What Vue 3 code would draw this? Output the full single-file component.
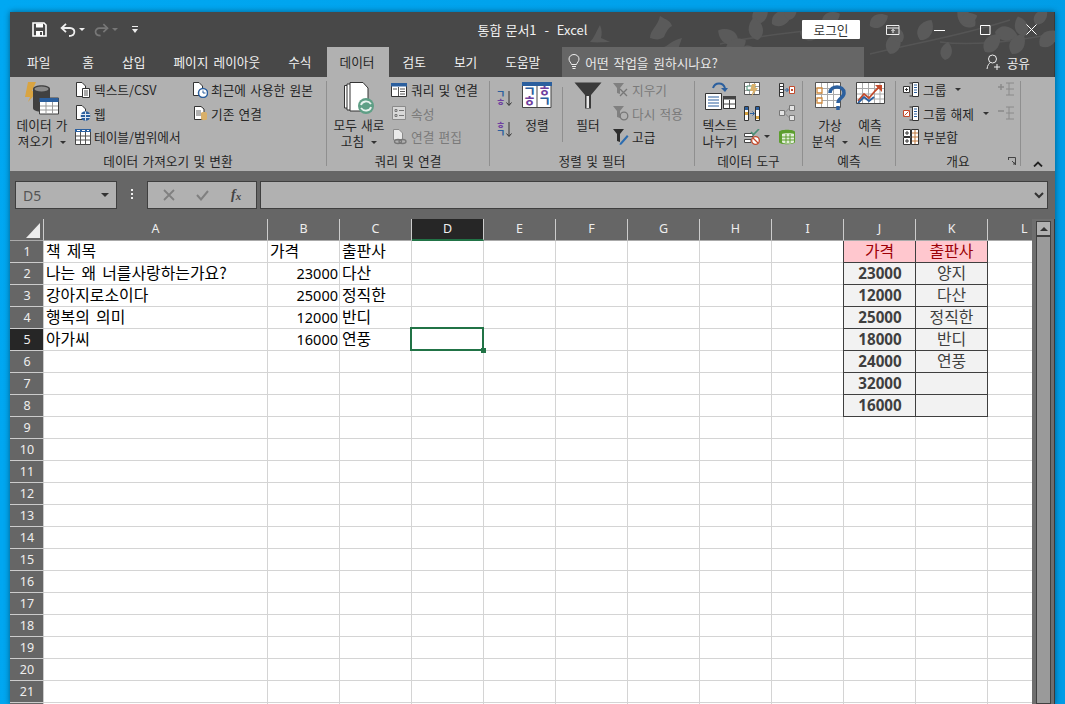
<template>
  <div class="desktop">
    <div class="window">
      <svg class="decor" width="1045" height="65" viewBox="0 0 1045 65">
        <g fill="none" stroke="#555" stroke-width="1.5">
          <path d="M710 32C760 20 800 22 840 10" />
          <path d="M860 42C910 30 950 24 1000 8" />
          <path d="M930 30C960 34 1000 30 1044 22" />
        </g>
        <g fill="#5a5a5a">
          <path
            v-for="(l, i) in leaves"
            :key="i"
            d="M0 0C4 -10 16 -10 23 0C16 9 4 9 0 0Z"
            :transform="`translate(${l[0]} ${l[1]}) rotate(${l[2]}) scale(${l[3]})`"
          />
          <path d="M580 30C584 26 586 20 590 13C592 18 592 22 591 26L600 30C594 30 588 31 580 30Z" />
          <path d="M640 26C640 18 648 14 650 4C656 8 660 8 662 14C658 16 656 20 654 25C650 28 646 28 640 26Z" />
          <path d="M652 36C658 34 662 28 672 26C670 32 668 36 668 40L676 46C668 46 660 42 652 36Z" />
        </g>
      </svg>

      <div class="titlebar">
        <div class="quick">
          <svg width="15" height="15" viewBox="0 0 15 15">
            <path d="M1 1H12L14 3V14H1Z" fill="none" stroke="#fff" stroke-width="1.6" />
            <path d="M4 1.5H11V5.5H4ZM4 9H11V14H4Z" fill="#fff" />
            <path d="M8 10H10V13H8Z" fill="#484848" />
          </svg>
          <svg class="undo" width="16" height="14" viewBox="0 0 16 14">
            <path d="M2 5H10C16 5 16 13 9 13" fill="none" stroke="#eee" stroke-width="1.8" />
            <path d="M6 0.8L1.6 5L6 9.2" fill="none" stroke="#eee" stroke-width="1.8" />
          </svg>
          <span class="tri"></span>
          <svg class="redo" width="15" height="14" viewBox="0 0 16 14">
            <path d="M14 5H6C0 5 0 13 7 13" fill="none" stroke="#777" stroke-width="1.8" />
            <path d="M10 0.8L14.4 5L10 9.2" fill="none" stroke="#777" stroke-width="1.8" />
          </svg>
          <span class="tri dim"></span>
          <svg class="custom" width="6" height="8" viewBox="0 0 6 8">
            <path d="M0 0H6V1H0ZM0 3H6L3 7Z" fill="#eee" />
          </svg>
        </div>
        <div class="doc-title">통합 문서1&nbsp; - &nbsp;Excel</div>
        <div class="controls">
          <button class="login">로그인</button>
          <div class="ctl">
            <svg width="14" height="10" viewBox="0 0 14 10">
              <path d="M.5.5H13V9.5H.5ZM.5 3H13" fill="none" stroke="#eee" />
              <path d="M7 8V4.5M5.4 6L7 4.4L8.6 6" fill="none" stroke="#eee" />
            </svg>
          </div>
          <div class="ctl">
            <svg width="11" height="10" viewBox="0 0 11 10"><path d="M0 5.5H11" stroke="#fff" /></svg>
          </div>
          <div class="ctl">
            <svg width="11" height="10" viewBox="0 0 11 10"><path d="M.5.5H10V9.5H.5Z" fill="none" stroke="#fff" /></svg>
          </div>
          <div class="ctl">
            <svg width="11" height="11" viewBox="0 0 11 11"><path d="M.5.5L10.5 10.5M10.5.5L.5 10.5" stroke="#fff" /></svg>
          </div>
        </div>
      </div>

      <div class="tabbar">
        <div class="tabs">
          <span
            v-for="t in tabs"
            :key="t"
            :class="['tab', { active: t === '데이터', first: t === '파일' }]"
          >{{ t }}</span>
        </div>
        <div class="search">
          <svg width="12" height="16" viewBox="0 0 12 16">
            <path d="M3.5 10.5C3 8.5 1 7.5 1 5A5 4.5 0 0 1 11 5C11 7.5 9 8.500 8.500 10.500Z" fill="none" stroke="#eee" />
            <path d="M4 12.500H8M4.500 14.500H7.500" stroke="#eee" />
          </svg>
          <span>어떤 작업을 원하시나요?</span>
        </div>
        <div class="share">
          <svg width="15" height="16" viewBox="0 0 15 16">
            <circle cx="6.500" cy="5" r="4" fill="none" stroke="#eee" />
            <path d="M1 15C1.500 11 3 9.500 4.500 8.500M11 10V16M8 13H14" fill="none" stroke="#eee" />
          </svg>
          <span>공유</span>
        </div>
      </div>

      <div class="ribbon">
        <!-- 데이터 가져오기 및 변환 -->
        <section class="group g1">
          <div class="body">
            <div class="big w54">
              <div class="slot">
                <svg width="34" height="36" viewBox="0 0 34 36">
                  <path d="M11 0H3L0 15H5L3 20L13 9H7Z" fill="#d9a441" />
                  <path d="M8 7C8 2 25 2 25 7V26C25 31 8 31 8 26Z" fill="#404040" />
                  <ellipse cx="16.500" cy="7" rx="7" ry="2.500" fill="#8a8a8a" />
                  <path d="M14.500 16H33.500V32H14.500Z" fill="#fff" stroke="#404040" />
                  <path d="M14.500 16H33.500V20H14.500Z" fill="#2b5f9e" />
                  <path d="M21 20V32M27.500 20V32M15 24H33M15 28H33" stroke="#999" />
                </svg>
              </div>
              <div>데이터 가</div>
              <div>져오기 <span class="tri ink"></span></div>
            </div>
            <div class="col w117">
              <div class="row">
                <svg class="ic" width="16" height="16" viewBox="0 0 16 16">
                  <path d="M1.500.500H7L10.500 4V14.500H1.500Z" fill="#fff" stroke="#333" />
                  <path d="M7.500 6.500H14.500V15.500H7.500Z" fill="#fff" stroke="#333" />
                  <path d="M9 9H13M9 11H13M9 13H13" stroke="#555" />
                </svg>
                <span>텍스트/CSV</span>
              </div>
              <div class="row">
                <svg class="ic" width="16" height="16" viewBox="0 0 16 16">
                  <path d="M1.500.500H7L10.500 4V14.500H1.500Z" fill="#fff" stroke="#333" />
                  <circle cx="10.500" cy="11" r="4.800" fill="#2b5f9e" />
                  <path d="M6 9.500H15M6 12.500H15M10.500 6.500V15.500" stroke="#dfe8f2" />
                </svg>
                <span>웹</span>
              </div>
              <div class="row">
                <svg class="ic" width="16" height="16" viewBox="0 0 16 16">
                  <path d="M.500.500H15.500V15.500H.500Z" fill="#fff" stroke="#444" />
                  <path d="M0 0H16V3H0Z" fill="#2b5f9e" />
                  <path d="M2 1.500H5M7 1.500H10M12 1.500H14" stroke="#fff" />
                  <path d="M5.500 3V15M10.500 3V15M1 7H15M1 11H15" stroke="#555" />
                </svg>
                <span>테이블/범위에서</span>
              </div>
            </div>
            <div class="col">
              <div class="row">
                <svg class="ic" width="16" height="16" viewBox="0 0 16 16">
                  <path d="M1.500.500H7L10.500 4V13.500H1.500Z" fill="#fff" stroke="#333" />
                  <circle cx="11" cy="11" r="4.500" fill="#fff" stroke="#2b5f9e" stroke-width="1.500" />
                  <path d="M11 8.500V11H13.500" fill="none" stroke="#2b5f9e" />
                </svg>
                <span>최근에 사용한 원본</span>
              </div>
              <div class="row">
                <svg class="ic" width="16" height="16" viewBox="0 0 16 16">
                  <path d="M2.500 1.500H9L12 4V14.500H2.500Z" fill="#fff" stroke="#333" />
                  <path d="M4 6H9M4 8H9M4 10H9" stroke="#666" />
                  <path d="M9 8C9 6.500 15 6.500 15 8V14C15 15.500 9 15.500 9 14Z" fill="#d9b06a" />
                </svg>
                <span>기존 연결</span>
              </div>
            </div>
          </div>
          <div class="label">데이터 가져오기 및 변환</div>
        </section>
        <i class="sep"></i>

        <!-- 쿼리 및 연결 -->
        <section class="group g2">
          <div class="body">
            <div class="big w56">
              <div class="slot">
                <svg width="32" height="34" viewBox="0 0 32 34">
                  <path d="M1.500 3.500H16V26H1.500Z" fill="#fff" stroke="#333" />
                  <path d="M4 2H18V28H4Z" fill="#fff" stroke="#333" />
                  <path d="M7 .500H20L25 6V29H7Z" fill="#fff" stroke="#333" />
                  <circle cx="23" cy="24" r="8" fill="#5f9f86" />
                  <path d="M18 23C19 19 25 18 28 22M28 25C27 29 21 30 18 26" fill="none" stroke="#e8f2ee" stroke-width="1.800" />
                </svg>
              </div>
              <div>모두 새로</div>
              <div>고침 <span class="tri ink"></span></div>
            </div>
            <div class="col">
              <div class="row">
                <svg class="ic" width="16" height="14" viewBox="0 0 16 14">
                  <path d="M.500.500H15.500V13.500H.500Z" fill="#fff" stroke="#333" />
                  <path d="M0 0H16V3.500H0Z" fill="#2b5f9e" />
                  <path d="M9 6H14M9 8.500H14M9 11H14M7.500 4V13M2 6H6" stroke="#555" />
                </svg>
                <span>쿼리 및 연결</span>
              </div>
              <div class="row off">
                <svg class="ic" width="16" height="14" viewBox="0 0 16 14">
                  <path d="M1.500.500H14.500V13.500H1.500Z" fill="#d8d8d8" stroke="#8a8a8a" />
                  <path d="M4 3.500H6V5.500H4ZM4 8.500H6V10.500H4ZM8 4.500H13M8 9.500H13" fill="none" stroke="#777" />
                </svg>
                <span>속성</span>
              </div>
              <div class="row off">
                <svg class="ic" width="16" height="16" viewBox="0 0 16 16">
                  <path d="M2.500.500H8L11.500 4V11H2.500Z" fill="#eaeaea" stroke="#8a8a8a" />
                  <ellipse cx="7" cy="12.500" rx="3.500" ry="2" fill="none" stroke="#777" stroke-width="1.300" />
                  <ellipse cx="11.500" cy="12.500" rx="3.500" ry="2" fill="none" stroke="#777" stroke-width="1.300" />
                </svg>
                <span>연결 편집</span>
              </div>
            </div>
          </div>
          <div class="label">쿼리 및 연결</div>
        </section>
        <i class="sep"></i>

        <!-- 정렬 및 필터 -->
        <section class="group g3">
          <div class="body">
            <div class="sort-col">
              <svg class="jamo-icon" width="16" height="16" viewBox="0 0 16 16">
                <text class="jamo"><tspan x="-1" y="7" class="blue">ㄱ</tspan><tspan x="-1" y="15" class="purple">ㅎ</tspan></text>
                <path d="M12 0V14M9.500 11.500L12 14.500L14.500 11.500" fill="none" stroke="#333" />
              </svg>
              <svg class="jamo-icon" width="16" height="16" viewBox="0 0 16 16">
                <text class="jamo"><tspan x="-1" y="7" class="purple">ㅎ</tspan><tspan x="-1" y="15" class="blue">ㄱ</tspan></text>
                <path d="M12 0V14M9.500 11.500L12 14.500L14.500 11.500" fill="none" stroke="#333" />
              </svg>
            </div>
            <div class="big w40 ml4">
              <div class="slot">
                <svg class="jamo-icon" width="30" height="26" viewBox="0 0 30 26">
                  <path d="M.500.500H29V25.500H.500Z" fill="#fff" stroke="#444" />
                  <path d="M0 0H30V4H0Z" fill="#2b5f9e" />
                  <path d="M15 4V26" stroke="#444" />
                  <text class="jamo big-j"><tspan x="1" y="14" class="blue">ㄱ</tspan><tspan x="1" y="24" class="purple">ㅎ</tspan><tspan x="16" y="14" class="purple">ㅎ</tspan><tspan x="16" y="24" class="blue">ㄱ</tspan></text>
                </svg>
              </div>
              <div>정렬</div>
            </div>
            <i class="inner-sep"></i>
            <div class="big w40 ml5">
              <div class="slot">
                <svg width="28" height="28" viewBox="0 0 28 28">
                  <path d="M.500.500H27.500L17 13V26.500H11V13Z" fill="#3a3a3a" />
                  <path d="M12.500 14H15V26H12.500Z" fill="#e8e8e8" />
                </svg>
              </div>
              <div>필터</div>
            </div>
            <div class="col ml5">
              <div class="row off">
                <svg class="ic" width="16" height="16" viewBox="0 0 16 16">
                  <path d="M0 1H11L7 6V12L4 11V6Z" fill="#808080" />
                  <path d="M7 7L14 14M14 7L7 14" stroke="#777" stroke-width="1.300" />
                </svg>
                <span>지우기</span>
              </div>
              <div class="row off">
                <svg class="ic" width="16" height="16" viewBox="0 0 16 16">
                  <path d="M0 1H11L7 6V13L4 12V6Z" fill="#808080" />
                  <circle cx="11" cy="11" r="3.800" fill="none" stroke="#777" stroke-width="1.300" />
                </svg>
                <span>다시 적용</span>
              </div>
              <div class="row">
                <svg class="ic" width="16" height="18" viewBox="0 0 16 18">
                  <path d="M0 1H11L7 6V14L4 13V6Z" fill="#2e2e2e" />
                  <path d="M7 15L14 7L15.500 8.500L8.500 16.500L6.500 17Z" fill="#2b6cb0" />
                </svg>
                <span>고급</span>
              </div>
            </div>
          </div>
          <div class="label">정렬 및 필터</div>
        </section>
        <i class="sep"></i>

        <!-- 데이터 도구 -->
        <section class="group g4">
          <div class="body">
            <div class="big w46">
              <div class="slot">
                <svg width="31" height="28" viewBox="0 0 31 28">
                  <path d="M8 6C10 0 18 0 20 6" fill="none" stroke="#2b5f9e" stroke-width="2" />
                  <path d="M16 6H23L20 10Z" fill="#2b5f9e" />
                  <path d="M.500 11.500H16.500V27.500H.500Z" fill="#fff" stroke="#333" />
                  <path d="M3 15H14M3 18H14M3 21H14M3 24H14" stroke="#2b5f9e" />
                  <path d="M18.500 14.500H30.500V26.500H18.500Z" fill="#fff" stroke="#333" />
                  <path d="M18 14H31V17.500H18Z" fill="#444" />
                  <path d="M24.500 18V26M19 22H30" stroke="#444" />
                </svg>
              </div>
              <div>텍스트</div>
              <div>나누기</div>
            </div>
            <div class="col w35 ml1">
              <div class="row">
                <svg width="16" height="15" viewBox="0 0 16 15">
                  <path d="M.500.500H15.500V12.500H.500Z" fill="#fff" stroke="#555" />
                  <path d="M5.500 1V12M10.500 1V12M1 4.500H15M1 8.500H15" stroke="#999" />
                  <path d="M3 4H11V8H3Z" fill="#fff" stroke="#4b8f75" />
                  <path d="M12 2H8L6 9H9L7 15L14 6H11Z" fill="#d9b06a" />
                </svg>
              </div>
              <div class="row">
                <svg width="16" height="15" viewBox="0 0 16 15">
                  <path d="M.500.500H4.500V14.500H.500ZM11.500.500H15.500V14.500H11.500Z" fill="#fff" stroke="#333" />
                  <path d="M1 1H4V4H1ZM12 1H15V4H12Z" fill="#2b5f9e" />
                  <path d="M1 6H4V9H1ZM12 10H15V13H12Z" fill="#d9a441" />
                  <path d="M6 7.500H10M8.500 5.500L10.500 7.500L8.500 9.500" fill="none" stroke="#2b5f9e" />
                </svg>
              </div>
              <div class="row">
                <svg width="16" height="16" viewBox="0 0 16 16">
                  <path d="M.500 4.500H9V7.500H.500ZM.500 10.500H7V13.500H.500Z" fill="#fff" stroke="#444" />
                  <path d="M7 3L9.500 5.500L15 0" fill="none" stroke="#4b8f75" stroke-width="1.600" />
                  <circle cx="11.500" cy="11.500" r="3.800" fill="#fff" stroke="#c24a2c" stroke-width="1.300" />
                  <path d="M9 9L14 14" stroke="#c24a2c" stroke-width="1.300" />
                </svg>
                <span class="tri ink ml4"></span>
              </div>
            </div>
            <div class="col">
              <div class="row">
                <svg width="16" height="14" viewBox="0 0 16 14">
                  <path d="M.500.500H4.500V13.500H.500Z" fill="#fff" stroke="#333" />
                  <path d="M1 3.500H4M1 6.500H4M1 9.500H4" stroke="#333" />
                  <path d="M5.500 7H9M7.500 5L9.500 7L7.500 9" fill="none" stroke="#2b5f9e" />
                  <path d="M10.500 3.500H15.500V10.500H10.500Z" fill="#fff" stroke="#c24a2c" />
                  <path d="M12 6H14V8H12Z" fill="#c24a2c" />
                </svg>
              </div>
              <div class="row">
                <svg width="16" height="16" viewBox="0 0 16 16">
                  <path d="M.500 5.500H5.500V10.500H.500ZM10.500.500H15.500V5.500H10.500ZM10.500 10.500H15.500V15.500H10.500Z" fill="#e4e4e4" stroke="#777" />
                  <path d="M5.500 8L10.500 3M5.500 8L10.500 13" stroke="#888" />
                </svg>
              </div>
              <div class="row">
                <svg width="16" height="16" viewBox="0 0 16 16">
                  <path d="M0 3C0 0 16 0 16 3V13C16 16 0 16 0 13Z" fill="#5c9e2e" />
                  <path d="M3 5C3 4 15 4 15 5V13C15 15 3 15 3 13Z" fill="#e4eedc" />
                  <path d="M7 5V14M11 5V14M3 8H15M3 11H15" stroke="#5c9e2e" />
                </svg>
              </div>
            </div>
          </div>
          <div class="label">데이터 도구</div>
        </section>
        <i class="sep"></i>

        <!-- 예측 -->
        <section class="group g5">
          <div class="body">
            <div class="big w40">
              <div class="slot">
                <svg width="31" height="30" viewBox="0 0 31 30">
                  <path d="M.500.500H25.500V25.500H.500Z" fill="#fff" stroke="#555" />
                  <path d="M6.500 1V25M12.500 1V25M18.500 1V25M1 6.500H25M1 12.500H25M1 18.500H25" stroke="#aaa" />
                  <path d="M2 6H7V11H2ZM2 16H7V21H2Z" fill="#fff" stroke="#d08a3e" stroke-width="1.300" />
                  <path d="M15 11C15 3 29 3 29 11C29 16 23 16 23 21M23 24V28" fill="none" stroke="#2b5f9e" stroke-width="3.500" />
                </svg>
              </div>
              <div>가상</div>
              <div>분석 <span class="tri ink"></span></div>
            </div>
            <div class="big w40">
              <div class="slot">
                <svg width="29" height="26" viewBox="0 0 29 26">
                  <path d="M.500.500H28.500V21.500H.500Z" fill="#fff" stroke="#444" />
                  <path d="M6.500 1V21M12.500 1V21M18.500 1V21M24 1V21M1 6.500H28M1 12H28M1 17H28" stroke="#aaa" />
                  <path d="M2 19L8 12L13 16L19 9L24 4" fill="none" stroke="#c24a2c" stroke-width="1.800" />
                  <path d="M2 21L8 15L13 19L18 15" fill="none" stroke="#2b5f9e" stroke-width="1.800" />
                  <path d="M19 3H26V10Z" fill="#c24a2c" />
                </svg>
              </div>
              <div>예측</div>
              <div>시트</div>
            </div>
          </div>
          <div class="label">예측</div>
        </section>
        <i class="sep"></i>

        <!-- 개요 -->
        <section class="group g6">
          <div class="body">
            <div class="col w95">
              <div class="row">
                <svg class="ic" width="16" height="15" viewBox="0 0 16 15">
                  <path d="M.500 4.500H6.500V10.500H.500Z" fill="#fff" stroke="#333" />
                  <path d="M2 7.500H5M3.500 6V9" stroke="#333" />
                  <path d="M6.500 1H9M6.500 14H9" stroke="#333" />
                  <path d="M9.500.500H15.500V14.500H9.500Z" fill="#fff" stroke="#333" />
                  <path d="M11 3H14M11 5.500H14M11 8H14M11 10.500H14" stroke="#2b5f9e" />
                </svg>
                <span>그룹</span>
                <span class="tri ink ml9"></span>
              </div>
              <div class="row">
                <svg class="ic" width="16" height="15" viewBox="0 0 16 15">
                  <path d="M.500 4.500H6.500V10.500H.500Z" fill="#fff" stroke="#c24a2c" />
                  <path d="M1.500 9.500L5.500 5.500" stroke="#c24a2c" />
                  <path d="M6.500 1H9M6.500 14H9" stroke="#333" />
                  <path d="M9.500.500H15.500V14.500H9.500Z" fill="#fff" stroke="#333" />
                  <path d="M11 3H14M11 5.500H14M11 8H14M11 10.500H14" stroke="#2b5f9e" />
                </svg>
                <span>그룹 해제</span>
                <span class="tri ink ml9"></span>
              </div>
              <div class="row">
                <svg class="ic" width="16" height="16" viewBox="0 0 16 16">
                  <path d="M.500.500H7.500V7.500H.500ZM.500 8.500H7.500V15.500H.500Z" fill="#fff" stroke="#333" />
                  <path d="M2 4H6M4 2V6M2 12H6M4 10V14" stroke="#333" />
                  <path d="M8.500.500H15.500V15.500H8.500Z" fill="#fff" stroke="#333" />
                  <path d="M12 1V15M9 4H15M9 8H15M9 12H15" stroke="#c27a3e" />
                </svg>
                <span>부분합</span>
              </div>
            </div>
            <div class="col outline">
              <div class="row">
                <svg width="16" height="15" viewBox="0 0 16 15">
                  <path d="M0 5H6M3 2V8" stroke="#8a8a8a" stroke-width="1.500" />
                  <path d="M8 1H16M8 7H16M8 13H16M11 1V13" stroke="#8a8a8a" />
                </svg>
              </div>
              <div class="row">
                <svg width="16" height="15" viewBox="0 0 16 15">
                  <path d="M0 5H6" stroke="#8a8a8a" stroke-width="1.500" />
                  <path d="M8 1H16M8 7H16M8 13H16M11 1V13" stroke="#8a8a8a" />
                </svg>
              </div>
            </div>
          </div>
          <div class="label">
            개요
            <svg class="launcher" width="8" height="8" viewBox="0 0 8 8">
              <path d="M0 .500H7.500V8M.500 0V3M4 4L7 7M5 7H7V5" fill="none" stroke="#444" />
            </svg>
          </div>
        </section>
        <i class="sep"></i>

        <div class="collapse">
          <svg width="10" height="6" viewBox="0 0 10 6"><path d="M1 5.500L5 1.500L9 5.500" fill="none" stroke="#222" stroke-width="1.800" /></svg>
        </div>
      </div>

      <div class="formula-band">
        <div class="name-box">
          <span>D5</span>
          <span class="tri big-tri"></span>
        </div>
        <div class="dots"><i></i><i></i><i></i></div>
        <div class="fx-box">
          <svg width="12" height="12" viewBox="0 0 12 12"><path d="M1 1L11 11M11 1L1 11" stroke="#808080" stroke-width="1.800" /></svg>
          <svg width="13" height="11" viewBox="0 0 13 11"><path d="M1 5L5 9.500L12 1" fill="none" stroke="#808080" stroke-width="2" /></svg>
          <span class="fx">f<sub>x</sub></span>
        </div>
        <div class="formula-input">
          <svg width="10" height="7" viewBox="0 0 10 7"><path d="M1 1L5 5L9 1" fill="none" stroke="#333" stroke-width="2" /></svg>
        </div>
      </div>

      <div class="sheet-area">
        <div class="sheet">
          <div class="corner"><span class="corner-tri"></span></div>
          <div
            v-for="c in columns"
            :key="c"
            :class="['col-head', { sel: c === 'D', last: c === 'L' }]"
          >{{ c }}</div>
          <template v-for="n in rowCount" :key="n">
            <div :class="['row-head', { sel: n === 5 }]">{{ n }}</div>
            <div
              v-for="c in columns"
              :key="c"
              :class="cellClass(c, n)"
            >
              {{ cellText(c, n) }}
              <template v-if="c === 'D' && n === 5">
                <span class="cursor"></span>
                <span class="handle"></span>
              </template>
            </div>
          </template>
        </div>
        <div class="scrollbar">
          <div class="scroll-up"><span class="up-tri"></span></div>
          <div class="scroll-thumb"></div>
        </div>
      </div>
    </div>
  </div>
</template>

<script setup>
const tabs = ['파일', '홈', '삽입', '페이지 레이아웃', '수식', '데이터', '검토', '보기', '도움말']
const columns = ['A', 'B', 'C', 'D', 'E', 'F', 'G', 'H', 'I', 'J', 'K', 'L']
const rowCount = 22

const leaves = [
  [728, 30, -150, 1], [745, 12, -60, 1], [748, 28, -100, 1], [762, 12, -30, 1], [778, 8, -70, .8],
  [716, 40, -30, 1], [730, 40, -10, .7], [790, 20, 20, .8], [812, 12, -30, .9],
  [880, 42, -70, 1], [910, 28, -60, 1], [892, 30, -120, .8], [965, 14, -140, 1],
  [950, 10, -20, .8], [985, 20, 10, 1], [1002, 42, -60, 1], [1015, 24, -110, .9],
  [1025, 12, -50, .8], [1030, 34, -40, 1], [860, 14, -30, .9], [935, 48, -80, .8], [975, 40, -50, 1],
]

const cells = {
  A1: '책 제목', A2: '나는 왜 너를사랑하는가요?', A3: '강아지로소이다', A4: '행복의 의미', A5: '아가씨',
  B1: '가격', B2: 23000, B3: 25000, B4: 12000, B5: 16000,
  C1: '출판사', C2: '다산', C3: '정직한', C4: '반디', C5: '연풍',
  J1: '가격', J2: 23000, J3: 12000, J4: 25000, J5: 18000, J6: 24000, J7: 32000, J8: 16000,
  K1: '출판사', K2: '양지', K3: '다산', K4: '정직한', K5: '반디', K6: '연풍',
}

const cellText = (c, n) => cells[c + n] ?? ''

function cellClass(c, n) {
  const inTable = (c === 'J' || c === 'K') && n <= 8
  return [
    'cell',
    {
      num: typeof cells[c + n] === 'number',
      last: c === 'L',
      tbl: inTable,
      bad: inTable && n === 1,
      calc: inTable && n > 1,
      strong: c === 'J' && inTable && n > 1,
      active: c === 'D' && n === 5,
    },
  ]
}
</script>

<style scoped>
.desktop {
  width: 1065px;
  height: 704px;
  padding: 12px 10px 0;
  box-sizing: border-box;
  overflow: hidden;
  background: linear-gradient(100deg, #00a8f2, #009ce6);
  font-family: "Noto Sans CJK KR", "Noto Sans", sans-serif;
  font-size: 12.7px;
  word-spacing: 1.4px;
  color: #262626;
}

.window {
  position: relative;
  width: 1045px;
  height: 692px;
  overflow: hidden;
  background: #484848;
  box-shadow: 0 0 6px rgba(0, 0, 0, 0.45), inset -1px 0 0 #3a3a3a;
}

.decor {
  position: absolute;
  left: 0;
  top: 0;
}

.titlebar {
  position: relative;
  display: grid;
  grid-template-columns: 1fr auto 1fr;
  align-items: center;
  height: 35px;
  color: #f0f0f0;
}

.quick {
  display: flex;
  align-items: center;
  padding-left: 22px;
}

.undo {
  margin-left: 13px;
}

.redo {
  margin-left: 9px;
}

.custom {
  margin-left: 14px;
}

.tri {
  display: inline-block;
  width: 0;
  height: 0;
  margin-left: 3px;
  vertical-align: middle;
  border-left: 3px solid transparent;
  border-right: 3px solid transparent;
  border-top: 3px solid #eee;
}

.tri.dim {
  border-top-color: #777;
}

.tri.ink {
  border-top-color: #333;
}

.doc-title {
  font-size: 13px;
  white-space: nowrap;
  word-spacing: 1px;
}

.controls {
  display: flex;
  align-items: center;
  justify-content: flex-end;
  padding-right: 1px;
}

.login {
  width: 58px;
  height: 19px;
  margin-right: 10px;
  padding: 0;
  border: 0;
  border-radius: 1px;
  background: #fff;
  color: #333;
  font: inherit;
}

.ctl {
  display: flex;
  align-items: center;
  justify-content: center;
  width: 46px;
  height: 30px;
}

.tabbar {
  position: relative;
  display: flex;
  height: 30px;
  color: #f0f0f0;
}

.tabs {
  display: flex;
}

.tab {
  padding: 0 14px;
  line-height: 29px;
  white-space: nowrap;
  word-spacing: 2.2px;
}

.tab.first {
  padding: 0 18px 0 17px;
}

.tab.active {
  margin-left: 1px;
  padding: 0 14px 0 13px;
  background: #b1b1b1;
  color: #262626;
}

.search {
  display: flex;
  align-items: center;
  gap: 5px;
  width: 302px;
  margin-left: 8px;
  padding-left: 6px;
  box-sizing: border-box;
  background: #666;
  color: #e8e8e8;
  word-spacing: 2px;
}

.share {
  display: flex;
  align-items: center;
  gap: 6px;
  margin-left: auto;
  padding-right: 25px;
}

.ribbon {
  display: flex;
  height: 94px;
  padding-top: 2px;
  box-sizing: border-box;
  background: #b1b1b1;
}

.group {
  display: flex;
  flex-direction: column;
  height: 92px;
}

.g1 { width: 316px; }
.g2 { width: 162px; }
.g3 { width: 204px; }
.g4 { width: 107px; }
.g5 { width: 92px; }
.g6 { width: 124px; }

.body {
  display: flex;
  height: 71px;
  white-space: nowrap;
}

.g1 .body { padding-left: 5px; }
.g2 .body { padding-left: 4px; }
.g3 .body { padding-left: 7px; }
.g4 .body { padding-left: 2px; }
.g5 .body { padding-left: 7px; }
.g6 .body { padding-left: 7px; }

.label {
  position: relative;
  height: 21px;
  line-height: 21px;
  text-align: center;
  white-space: nowrap;
}

.launcher {
  position: absolute;
  right: 4px;
  top: 7px;
}

.sep {
  width: 1px;
  height: 85px;
  margin-top: 2px;
  background: #8f8f8f;
}

.inner-sep {
  width: 1px;
  height: 55px;
  margin: 8px 0 0 5px;
  background: #8f8f8f;
}

.big {
  display: flex;
  flex-direction: column;
  align-items: center;
  line-height: 16px;
  text-align: center;
}

.slot {
  display: flex;
  justify-content: center;
  align-items: flex-start;
  height: 38px;
  padding-top: 3px;
  box-sizing: border-box;
}

.w40 { width: 40px; }
.w46 { width: 46px; }
.w54 { width: 54px; }
.w56 { width: 56px; }
.w35 { width: 35px; }
.w95 { width: 95px; }
.w117 { width: 117px; }
.ml1 { margin-left: 1px; }
.ml4 { margin-left: 4px; }
.ml5 { margin-left: 5px; }
.ml9 { margin-left: 9px; }

.g1 .w117 { margin-left: 6px; }
.g2 .col { margin-left: 4px; }

.col {
  display: flex;
  flex-direction: column;
  margin-top: -1px;
}

.row {
  display: flex;
  align-items: center;
  height: 23.5px;
}

.row .ic {
  margin-right: 4px;
  flex: none;
}

.g1 .row .ic,
.g3 .row .ic {
  margin-right: 3px;
}

.row.off {
  color: #7a7a7a;
}

.sort-col {
  display: flex;
  flex-direction: column;
  gap: 15px;
  padding-top: 12px;
}

.jamo-icon {
  overflow: visible;
}

.jamo {
  font-size: 10px;
  font-weight: 700;
}

.big-j {
  font-size: 14px;
}

.blue { fill: #2b5f9e; }
.purple { fill: #6f3fa0; }

.collapse {
  display: flex;
  flex: 1;
  justify-content: center;
  align-items: flex-end;
  height: 88px;
}

.formula-band {
  display: flex;
  align-items: flex-start;
  height: 48px;
  padding: 10px 6px 0 5px;
  box-sizing: border-box;
  background: #666;
}

.name-box,
.fx-box,
.formula-input {
  display: flex;
  align-items: center;
  height: 28px;
  box-sizing: border-box;
  border: 1px solid #3f3f3f;
  background: #b1b1b1;
}

.name-box {
  justify-content: space-between;
  width: 102px;
  padding: 0 7px;
  font-family: "Noto Sans", sans-serif;
  font-size: 14px;
  color: #555;
}

.big-tri {
  margin: 0;
  border-left-width: 4px;
  border-right-width: 4px;
  border-top: 4px solid #333;
}

.dots {
  display: flex;
  flex-direction: column;
  align-items: center;
  gap: 2px;
  width: 30px;
  padding-top: 8px;
}

.dots i {
  width: 2px;
  height: 2px;
  background: #f0f0f0;
}

.fx-box {
  justify-content: space-around;
  width: 110px;
  padding: 0 4px;
}

.fx {
  font-family: "Liberation Serif", serif;
  font-style: italic;
  font-weight: 700;
  font-size: 14px;
  color: #444;
}

.fx sub {
  font-size: 11px;
  line-height: 0;
  vertical-align: -1px;
}

.formula-input {
  justify-content: flex-end;
  width: 788px;
  margin-left: 3px;
  padding-right: 3px;
}

.sheet-area {
  display: flex;
}

.sheet {
  display: grid;
  grid-template-columns: 34px 224px repeat(10, 72px) 44px;
  grid-auto-rows: 22px;
  flex: none;
  background: #fff;
  font-size: 15.9px;
  word-spacing: 2.6px;
}

.corner,
.col-head,
.row-head {
  box-sizing: border-box;
  background: #666;
  color: #eee;
  font-family: "Noto Sans", sans-serif;
  font-size: 12.5px;
}

.corner {
  position: relative;
  border-right: 1px solid #ccc;
  border-bottom: 1px solid #aaa;
}

.corner-tri {
  position: absolute;
  right: 3px;
  bottom: 2px;
  width: 0;
  height: 0;
  border-left: 14px solid transparent;
  border-bottom: 15px solid #ececec;
}

.col-head {
  border-right: 1px solid #ccc;
  border-bottom: 1px solid #aaa;
  line-height: 20px;
  text-align: center;
}

.col-head.last {
  padding-left: 33px;
  border-right: 0;
  text-align: left;
}

.col-head.sel {
  border-bottom: 2px solid #217346;
  background: #262626;
}

.row-head {
  padding-left: 1px;
  border-right: 1px solid #ccc;
  border-bottom: 1px solid #ccc;
  line-height: 21px;
  text-align: center;
}

.row-head.sel {
  background: #262626;
}

.cell {
  position: relative;
  box-sizing: border-box;
  padding: 0 2px;
  border-right: 1px solid #d4d4d4;
  border-bottom: 1px solid #d4d4d4;
  color: #000;
  line-height: 19px;
  white-space: nowrap;
}

.cell.active {
  z-index: 2;
}

.cell.last {
  border-right: 0;
}

.cell.num {
  padding-right: 1px;
  font-family: "Noto Sans", sans-serif;
  font-size: 14.5px;
  line-height: 21px;
  text-align: right;
}

.cell.tbl {
  border-right-color: #3f3f3f;
  border-bottom-color: #3f3f3f;
  box-shadow: -1px 0 0 #3f3f3f;
  text-align: center;
}

.cell.bad {
  background: #ffc7ce;
  color: #9c0006;
  line-height: 20px;
}

.cell.calc {
  background: #f2f2f2;
  color: #3f3f3f;
}

.cell.strong {
  font-size: 15.2px;
  font-weight: 700;
}

.cursor {
  position: absolute;
  left: -2px;
  top: -2px;
  width: 74px;
  height: 24px;
  box-sizing: border-box;
  border: 2px solid #217346;
}

.handle {
  position: absolute;
  left: 69px;
  top: 19px;
  width: 5px;
  height: 5px;
  background: #217346;
}

.scrollbar {
  display: flex;
  flex-direction: column;
  width: 22px;
  height: 485px;
  padding: 2px 3px 0 4px;
  box-sizing: border-box;
  background: #6e6e6e;
}

.scroll-up {
  display: flex;
  align-items: center;
  justify-content: center;
  height: 15px;
  box-sizing: border-box;
  border: 1px solid #404040;
  background: #b1b1b1;
}

.up-tri {
  width: 0;
  height: 0;
  border-left: 4px solid transparent;
  border-right: 4px solid transparent;
  border-bottom: 4px solid #333;
}

.scroll-thumb {
  flex: 1;
  box-sizing: border-box;
  border: 1px solid #404040;
  background: #9a9a9a;
}
</style>

<style>
html,
body {
  margin: 0;
  overflow: hidden;
}
</style>
